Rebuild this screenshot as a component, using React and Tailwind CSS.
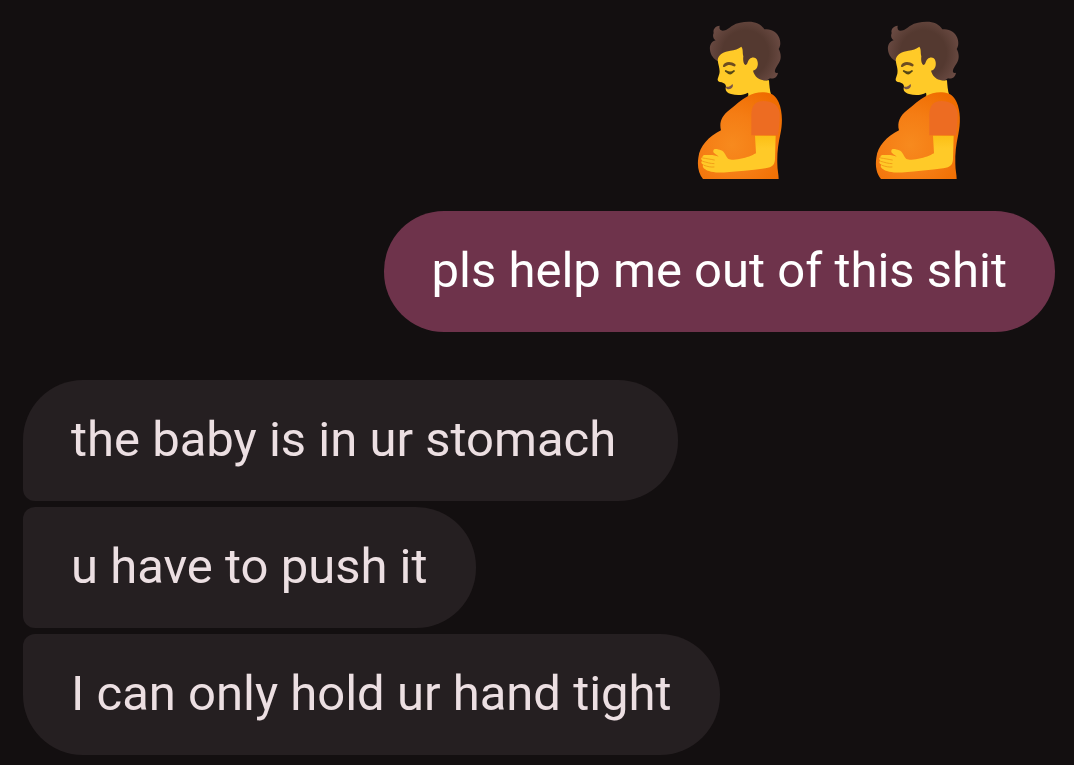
import React from 'react';
import clsx from 'clsx';

const replies = [
  { id: 1, text: 'the baby is in ur stomach', shape: 'rounded-r-[60px] rounded-tl-[60px] rounded-bl-xl', pad: 'pr-[62px]' },
  { id: 2, text: 'u have to push it', shape: 'rounded-r-[60px] rounded-l-xl', pad: 'pr-12' },
  { id: 3, text: 'I can only hold ur hand tight', shape: 'rounded-r-[60px] rounded-tl-xl rounded-bl-[60px]', pad: 'pr-12' }
];

function PregnantPerson({ id }) {
  return (
    <svg viewBox="45 33 258 474" className="w-[86px] h-[158px]" role="img" aria-label="pregnant person">
      <defs>
        <radialGradient id={`shirt-${id}`} gradientUnits="userSpaceOnUse" cx="150" cy="405" r="185">
          <stop offset="0" stopColor="#f78a1e" />
          <stop offset="0.5" stopColor="#f57d14" />
          <stop offset="1" stopColor="#ef6c00" />
        </radialGradient>
        <radialGradient id={`hair-${id}`} gradientUnits="userSpaceOnUse" cx="190" cy="130" r="115">
          <stop offset="0.6" stopColor="#543930" />
          <stop offset="1" stopColor="#6b4b43" />
        </radialGradient>
        <linearGradient id={`arm-${id}`} x1="0" y1="0" x2="0" y2="1">
          <stop offset="0" stopColor="#fbbf16" />
          <stop offset="0.35" stopColor="#ffca28" />
        </linearGradient>
      </defs>

      {/* hair */}
      <path
        fill={`url(#hair-${id})`}
        d="M113 47C111 56 114 62 122 62C133 62 141 53 151 47C165 38 182 35 200 35C221 35 238 42 247 58C268 55 286 67 292 84C297 99 295 109 290 117C298 131 298 147 291 158C285 168 277 178 279 186C281 190 284 190 288 188C286 202 275 208 264 205C257 212 247 213 237 211C224 208 216 197 212 183L180 200L107 153C96 148 86 136 84 120C82 105 89 94 101 91C94 86 91 78 95 69C92 57 101 48 113 47Z"
      />
      {/* face and neck */}
      <path
        fill="#ffca28"
        d="M178 110C169 117 158 120 145 122C127 125 109 132 107 150C109 167 115 178 112 191L107 207C106 213 110 216 119 217C126 219 132 223 132 230C128 240 134 248 147 252C165 257 184 256 198 248C200 254 199 260 196 265L232 276L268 256C263 242 262 226 261 211C240 213 220 207 213 182C226 180 230 164 226 152C223 141 210 140 203 147C196 153 197 165 190 165C183 160 183 148 184 139C181 128 184 117 178 110Z"
      />
      <path d="M123 167C127 155 146 152 160 163C163 168 158 171 153 168C144 163 137 164 129 170C125 172 122 170 123 167Z" fill="#6d4c20" />
      <path d="M131 183C137 188 149 189 156 183" fill="none" stroke="#554716" strokeWidth="5" strokeLinecap="round" />
      <path d="M134 186C139 197 151 195 154 186Z" fill="#554716" />
      <path d="M131 230C140 232 146 228 151 222C156 228 150 237 140 238C136 238 132 236 131 230Z" fill="#795548" />

      {/* shirt */}
      <path
        fill={`url(#shirt-${id})`}
        d="M197 259C212 250 229 246 246 247C267 248 282 257 290 277C302 305 302 340 295 373C288 405 285 430 286 462C286 480 290 493 290 507H63C50 492 45 469 49 443C53 408 80 380 117 361C111 337 119 318 142 300C162 285 176 270 197 259Z"
      />
      <path fill="#ed6c22" d="M208 376V316C208 288 219 273 244 273C271 273 290 285 293 309C294 334 290 357 288 376Z" />

      {/* arm */}
      <path
        fill={`url(#arm-${id})`}
        d="M219 377H281L279 445C279 464 272 472 250 475C210 480 168 484 134 487C108 490 77 485 67 476C61 471 61 466 65 464C57 460 56 455 61 452C56 447 57 443 62 442C59 435 69 434 76 435C90 434 101 436 110 440C103 432 92 430 94 422C96 414 108 418 117 421C128 425 129 435 137 445C143 452 156 449 175 446C196 443 209 437 222 430Z"
      />
      <path d="M62 444C75 446 87 448 97 450M62 454C74 457 85 461 96 461M66 466C77 470 87 472 96 471" fill="none" stroke="#f3a018" strokeWidth="3" strokeLinecap="round" />
    </svg>
  );
}

function Bubble({ className, children }) {
  return (
    <p className={clsx('w-fit pt-[29px] pb-[31px] pl-12 text-[49px] leading-[61px]', className)}>
      {children}
    </p>
  );
}

export default function App() {
  return (
    <main className="min-h-screen bg-[#130f10] pt-[21px] pb-[10px] pl-[23px] pr-[19px] font-['Roboto','Noto_Sans',sans-serif]">
      <section className="flex flex-col items-end">
        <div className="flex gap-[92px] pr-[94px]">
          <PregnantPerson id="a" />
          <PregnantPerson id="b" />
        </div>
        <Bubble className="mt-8 rounded-[60px] bg-[#6e334b] pr-12 text-white">
          pls help me out of this shit
        </Bubble>
      </section>

      <section className="mt-12 flex flex-col items-start gap-[6px]">
        {replies.map((r) => (
          <Bubble key={r.id} className={clsx('bg-[#251f21] text-[#ecdfe2]', r.shape, r.pad)}>
            {r.text}
          </Bubble>
        ))}
      </section>
    </main>
  );
}
